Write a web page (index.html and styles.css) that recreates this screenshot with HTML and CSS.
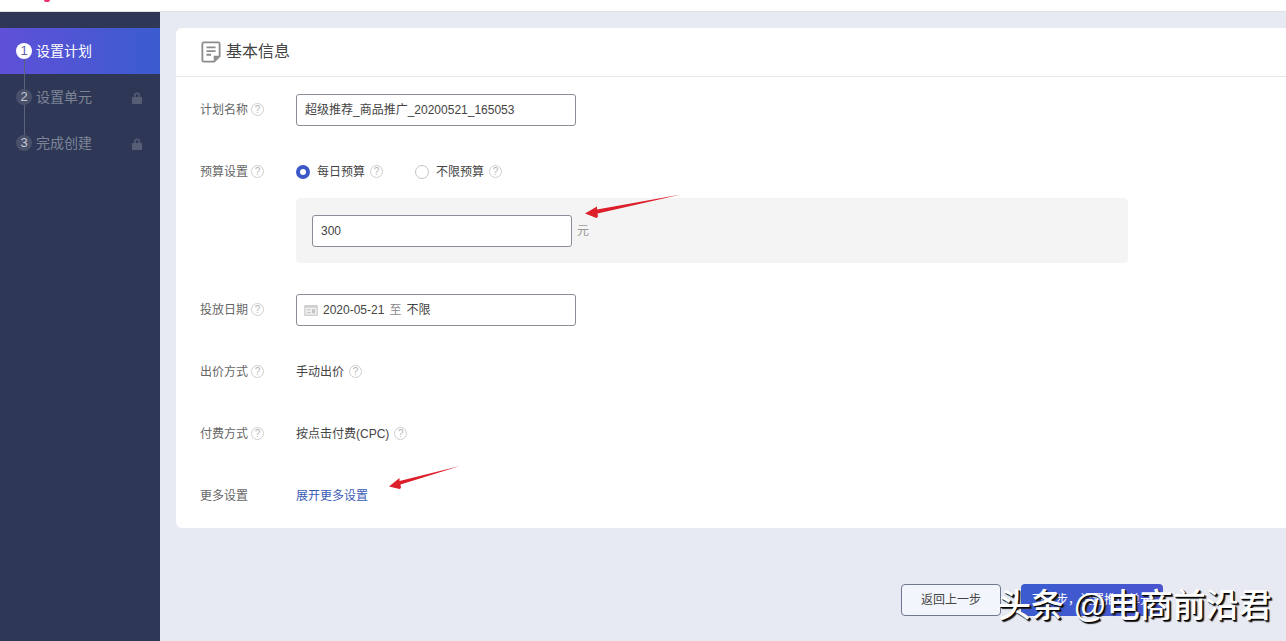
FILE: index.html
```html
<!DOCTYPE html>
<html lang="zh">
<head>
<meta charset="utf-8">
<title>设置计划</title>
<link rel="stylesheet" href="styles.css">
</head>
<body>
<header class="topbar"><span class="logo-mark"></span></header>
<div class="layout">
  <aside class="sidebar">
    <div class="step step-active"><span class="step-num">1</span><span class="step-name">设置计划</span></div>
    <div class="step step-line"><span class="step-num">2</span><span class="step-name">设置单元</span>
      <svg class="lock" viewBox="0 0 12 12"><path d="M3 5V3.6a3 3 0 0 1 6 0V5h1.2a.8.8 0 0 1 .8.8v5.2a1 1 0 0 1-1 1H2a1 1 0 0 1-1-1V5.8A.8.8 0 0 1 1.800 5zM4.500 5h3V3.600a1.500 1.500 0 0 0-3 0z"/></svg></div>
    <div class="step"><span class="step-num">3</span><span class="step-name">完成创建</span>
      <svg class="lock" viewBox="0 0 12 12"><path d="M3 5V3.6a3 3 0 0 1 6 0V5h1.2a.8.8 0 0 1 .8.8v5.2a1 1 0 0 1-1 1H2a1 1 0 0 1-1-1V5.8A.8.8 0 0 1 1.800 5zM4.500 5h3V3.600a1.500 1.500 0 0 0-3 0z"/></svg></div>
  </aside>
  <main class="content">
    <section class="card">
      <div class="card-head">
        <svg class="doc-icon" viewBox="0 0 22 24"><path d="M3 1.500h16a1.500 1.500 0 0 1 1.500 1.500v13.500l-6 6H3A1.500 1.500 0 0 1 1.500 21V3A1.500 1.500 0 0 1 3 1.500z" fill="none" stroke="#8c8c8c" stroke-width="2"/><path d="M6 7h10M6 11h10M6 15h5" stroke="#8c8c8c" stroke-width="2" fill="none"/><path d="M14 22v-6h6z" fill="#8c8c8c"/></svg>
        <h2 class="card-title">基本信息</h2>
      </div>
      <div class="form">
        <div class="row">
          <div class="label">计划名称<span class="help">?</span></div>
          <div class="field input">超级推荐_商品推广_20200521_165053</div>
        </div>
        <div class="row">
          <div class="label">预算设置<span class="help">?</span></div>
          <div class="radios">
            <span class="radio radio-on"></span><span class="radio-text">每日预算</span><span class="help help-wide">?</span>
            <span class="radio radio-off"></span><span class="radio-text">不限预算</span><span class="help help-wide">?</span>
          </div>
        </div>
        <div class="budget-box">
          <div class="input budget-input">300</div><span class="unit">元</span>
        </div>
        <div class="row row-date">
          <div class="label">投放日期<span class="help">?</span></div>
          <div class="field input date-input">
            <svg class="cal" viewBox="0 0 15 12"><rect width="15" height="12" rx="1" fill="#cfcfcf"/><rect x="1.500" y="3" width="12" height="7.500" fill="#f2f2f2"/><path d="M3 4.500h4v1.500H3zM3 7.500h4V9H3zM8.500 4.500h3.500V9H8.500z" fill="#c4c4c4"/></svg>
            <span>2020-05-21</span><span class="date-to">至</span><span>不限</span>
          </div>
        </div>
        <div class="row">
          <div class="label">出价方式<span class="help">?</span></div>
          <div class="value">手动出价<span class="help help-wide">?</span></div>
        </div>
        <div class="row">
          <div class="label">付费方式<span class="help">?</span></div>
          <div class="value">按点击付费(CPC)<span class="help help-wide">?</span></div>
        </div>
        <div class="row">
          <div class="label">更多设置</div>
          <div class="value link">展开更多设置</div>
        </div>
      </div>
    </section>
    <div class="actions">
      <div class="btn btn-back">返回上一步</div>
      <div class="btn btn-next">下一步，设置推广单元</div>
    </div>
  </main>
</div>
<svg class="arrows" viewBox="0 0 1286 641">
  <path d="M681 194.500L597.500 213.500L598 216.500L596.500 218L585 213.500L597 206.500L597 209.500z" fill="#dc1f2b"/>
  <path d="M460 466L400.500 484.500L401 488L399.500 489L389 486.500L399.500 478L399.500 481z" fill="#dc1f2b"/>
</svg>
<div class="watermark">头条 @电商前沿君</div>
</body>
</html>
```
FILE: styles.css
```css
* { box-sizing: border-box; }
html, body { margin: 0; height: 641px; overflow: hidden; }
body {
  position: relative;
  background: #e7eaf3;
  color: #333;
  font: 12px/1.4 "Liberation Sans", "Noto Sans CJK SC", sans-serif;
}
.topbar {
  height: 12px;
  background: #fff;
  border-bottom: 1px solid #dfe1e8;
  padding-left: 44px;
}
.logo-mark {
  display: block;
  width: 6px;
  height: 2px;
  background: #e8306a;
  border-radius: 0 0 3px 3px;
}
.layout { display: flex; height: 629px; }
.sidebar {
  width: 160px;
  flex: none;
  padding-top: 16px;
  background: #2e3856;
}
.step {
  position: relative;
  display: flex;
  align-items: center;
  height: 46px;
  padding: 0 17px 0 16px;
  color: #7d8496;
  font-size: 14px;
}
.step-active {
  color: #fff;
  background: linear-gradient(90deg, #5f50d8, #3b5ccf);
}
.step-active::after, .step-line::after {
  content: "";
  position: absolute;
  left: 24px;
  top: 23px;
  width: 1px;
  height: 46px;
  background: #5a6379;
}
.step-num {
  position: relative;
  z-index: 1;
  width: 16px;
  height: 16px;
  margin-right: 4px;
  border-radius: 50%;
  background: #49516a;
  color: #c5c8d2;
  font-size: 13px;
  line-height: 16px;
  text-align: center;
}
.step-active .step-num { background: #fff; color: #5f5fb0; }
.step-name { flex: 1; padding-top: 1px; }
.lock { width: 12px; height: 12px; margin-top: 2px; fill: #565e76; }
.content { flex: 1; min-width: 0; padding: 16px 0 0 16px; }
.card {
  height: 500px;
  background: #fff;
  border-radius: 6px 0 0 6px;
}
.card-head {
  display: flex;
  align-items: center;
  height: 49px;
  padding-left: 25px;
  border-bottom: 1px solid #e8e8e8;
}
.doc-icon { width: 20px; height: 22px; margin-right: 5px; }
.card-title {
  margin: 0;
  color: #444;
  font-size: 16px;
  font-weight: 400;
}
.form { padding: 17px 0 0 24px; }
.row {
  display: flex;
  align-items: center;
  height: 32px;
  margin-bottom: 30px;
}
.row-date { margin-top: 31px; }
.label {
  display: flex;
  align-items: center;
  width: 96px;
  flex: none;
  color: #666;
}
.help {
  display: inline-block;
  width: 13px;
  height: 13px;
  margin-left: 3px;
  border: 1px solid #cfcfcf;
  border-radius: 50%;
  color: #b5b5b5;
  font-size: 10px;
  line-height: 11px;
  text-align: center;
}
.help-wide { margin-left: 5px; }
.input {
  display: flex;
  align-items: center;
  height: 32px;
  background: #fff;
  border: 1px solid #8a8d96;
  border-radius: 3px;
  padding-left: 8px;
  color: #444;
}
.field { width: 280px; }
.radios { display: flex; align-items: center; color: #444; }
.radio {
  width: 14px;
  height: 14px;
  margin-right: 7px;
  border-radius: 50%;
}
.radio-on { border: 4px solid #3b57c8; background: #fff; }
.radio-off { margin-left: 32px; border: 1px solid #c4c4c4; background: #fff; }
.budget-box {
  display: flex;
  width: 832px;
  height: 65px;
  margin: -20px 0 0 96px;
  padding: 17px 16px;
  background: #f4f4f4;
  border-radius: 4px;
}
.budget-input { width: 260px; }
.unit { margin: 8px 0 0 5px; color: #999; }
.date-input { gap: 5px; padding-left: 7px; }
.cal { width: 14px; height: 11px; flex: none; }
.date-to { color: #888; }
.value { display: flex; align-items: center; color: #444; }
.link { color: #3b5bb5; }
.actions {
  display: flex;
  justify-content: flex-end;
  gap: 20px;
  margin-top: 56px;
  padding-right: 123px;
}
.btn {
  height: 32px;
  border-radius: 4px;
  line-height: 30px;
  text-align: center;
}
.btn-back {
  width: 100px;
  background: #f3f5fd;
  border: 1px solid #6f7890;
  color: #444;
}
.btn-next {
  width: 142px;
  background: linear-gradient(90deg, #3b5ccf, #4a55d0);
  color: #fff;
  line-height: 32px;
}
.arrows {
  position: absolute;
  left: 0;
  top: 0;
  width: 1286px;
  height: 641px;
  pointer-events: none;
}
.watermark {
  position: absolute;
  left: 998px;
  top: 584px;
  color: #fff;
  font-size: 33px;
  font-weight: 500;
  line-height: 44px;
  white-space: nowrap;
  text-shadow: 1px 1px 0 #000, 2px 2px 1px #222;
}
```
